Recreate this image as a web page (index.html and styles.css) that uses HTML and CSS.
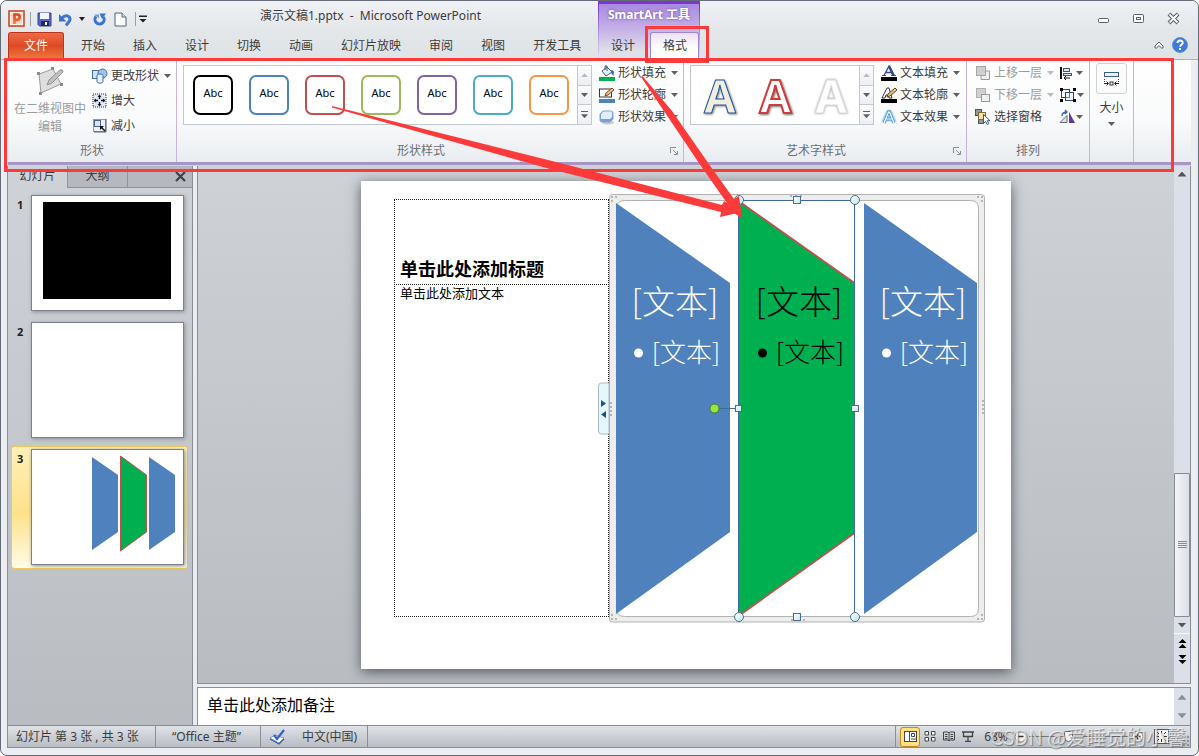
FILE: index.html
```html
<!DOCTYPE html>
<html lang="zh-CN">
<head>
<meta charset="utf-8">
<title>演示文稿1.pptx - Microsoft PowerPoint</title>
<link rel="stylesheet" href="styles.css">
</head>
<body>
<div class="window">
  <header class="header">
    <div class="header-main">
      <div class="title-row">
        <div class="quick">
          <svg class="app-logo" width="18" height="18" viewBox="0 0 18 18"><defs><linearGradient id="pg" x2="0" y2="1"><stop offset="0" stop-color="#d9431f"/><stop offset="1" stop-color="#ef8040"/></linearGradient></defs><rect x="1" y="1" width="15" height="15" fill="#fdf1e8" stroke="#c9492c" stroke-width="1.600"/><path d="M3 3h11v11H3z" fill="#fbd9c4"/><path d="M6.500 14V4.500H9a2.700 2.700 0 0 1 0 5.400H6.500" fill="none" stroke="url(#pg)" stroke-width="2.600"/></svg>
          <span class="vline"></span>
          <button class="icon-btn" aria-label="保存"><svg width="15" height="15" viewBox="0 0 15 15"><path d="M1 1h13v13H2.500L1 12.500z" fill="#5566c9" stroke="#3a3f9c"/><rect x="3" y="1" width="9" height="6" fill="#f2f6ff"/><rect x="4" y="9" width="8" height="5" fill="#262a55"/><rect x="8" y="10" width="2" height="3" fill="#fff"/></svg></button>
          <button class="icon-btn" aria-label="撤消"><svg width="15" height="15" viewBox="0 0 15 15"><path d="M4 6C8 1.500 13.500 4.500 11.500 9L8 13.500" fill="none" stroke="#3f76cf" stroke-width="3"/><path d="M1 2v7.500h7.500z" fill="#3a6fca"/></svg></button>
          <i class="caret dark"></i>
          <button class="icon-btn redo" aria-label="恢复"><svg width="15" height="15" viewBox="0 0 15 15"><path d="M4 4.500A4.600 4.600 0 1 0 11.500 5" fill="none" stroke="#3b73cf" stroke-width="3"/><path d="M7.500 1.500h6.500L10 7z" fill="#3b73cf"/><path d="M2 2.500h5v4z" fill="#6f9be2"/></svg></button>
          <button class="icon-btn doc" aria-label="新建"><svg width="13" height="15" viewBox="0 0 13 15"><path d="M1 1h7l4 4v9H1z" fill="#fff" stroke="#50647c"/><path d="M8 1v4h4" fill="#dbe6f2" stroke="#50647c"/></svg></button>
          <span class="vline"></span>
          <button class="icon-btn more" aria-label="自定义快速访问工具栏"><svg width="8" height="8" viewBox="0 0 8 8"><path d="M0 .5h8v1.500H0zM.5 4h7L4 7.500z" fill="#222"/></svg></button>
        </div>
        <h1 class="doc-title">演示文稿1.pptx&nbsp; -&nbsp; Microsoft PowerPoint</h1>
      </div>
      <nav class="tabs">
        <button class="tab file">文件</button>
        <button class="tab">开始</button><button class="tab">插入</button><button class="tab">设计</button><button class="tab">切换</button><button class="tab">动画</button><button class="tab">幻灯片放映</button><button class="tab">审阅</button><button class="tab">视图</button><button class="tab">开发工具</button>
      </nav>
    </div>
    <div class="context">
      <div class="context-title">SmartArt 工具</div>
      <div class="context-tabs"><button class="tab">设计</button><button class="tab active">格式</button></div>
    </div>
    <div class="header-end">
      <div class="win-controls">
        <button class="icon-btn" aria-label="最小化"><svg width="13" height="13" viewBox="0 0 13 13"><rect x="1.500" y="6.500" width="10" height="4" rx="1" fill="#fff" stroke="#5b5f6b"/></svg></button>
        <button class="icon-btn" aria-label="还原"><svg width="13" height="13" viewBox="0 0 13 13"><rect x="1.500" y="2.500" width="10" height="8" rx="1" fill="#fff" stroke="#5b5f6b"/><rect x="4.500" y="5.500" width="4" height="2" fill="none" stroke="#5b5f6b"/></svg></button>
        <button class="icon-btn" aria-label="关闭"><svg width="13" height="13" viewBox="0 0 13 13"><path d="M2 2l9 9M11 2l-9 9" stroke="#5b5f6b" stroke-width="4"/><path d="M2.500 2.500l8 8M10.500 2.500l-8 8" stroke="#fff" stroke-width="1.800"/></svg></button>
      </div>
      <div class="help-row">
        <button class="icon-btn" aria-label="折叠功能区"><svg width="10" height="8" viewBox="0 0 10 8"><path d="M5 1l4 4v2H7.500L5 4.700 2.500 7H1V5z" fill="#fff" stroke="#555b66"/></svg></button>
        <button class="icon-btn" aria-label="帮助"><svg width="16" height="16" viewBox="0 0 16 16"><circle cx="8" cy="8" r="7.500" fill="#3e7bd6" stroke="#5f93dc"/><path d="M5.500 6c0-3.400 5.200-3.300 5.200-.2 0 2-2.600 1.900-2.600 4" fill="none" stroke="#fff" stroke-width="1.900"/><rect x="7" y="11" width="2" height="2" fill="#fff"/></svg></button>
      </div>
    </div>
  </header>

  <section class="ribbon">
    <div class="group g-shape">
      <div class="group-body">
        <button class="big-btn" disabled>
          <svg width="30" height="32" viewBox="0 0 30 32"><path d="M4 8L18 3l8 15L6 27z" fill="#dedede" stroke="#999"/><path d="M12 19l2-5L25 4q3-1 3 2L17 17z" fill="#c2c2c2" stroke="#8f8f8f"/><g fill="#8c8c8c"><rect x="2" y="6" width="3" height="3"/><rect x="16" y="1" width="3" height="3"/><rect x="25" y="17" width="3" height="3"/><rect x="4" y="26" width="3" height="3"/></g></svg>
          <span>在二维视图中<br>编辑</span>
        </button>
        <div class="stack wide">
          <button class="cmd"><svg width="16" height="16" viewBox="0 0 16 16"><rect x=".5" y="2.500" width="8" height="8" fill="#cfe2f7" stroke="#3f6ea8"/><circle cx="10.500" cy="5.500" r="4.500" fill="#9fc3ea" stroke="#3f6ea8"/><path d="M5 7.500v6c0 2.200 6 2.200 6 0v-6c0-2-6-2-6 0z" fill="#e8f1fb" stroke="#3f6ea8"/></svg>更改形状<i class="caret"></i></button>
          <button class="cmd"><svg width="16" height="16" viewBox="0 0 16 16"><rect x="1" y="1" width="13" height="13" fill="#dfe9f7" stroke="#222b44" stroke-dasharray="1 1"/><path d="M7.500 2v4M7.500 9v4M2 7.500h4M9 7.500h4" stroke="#111" stroke-width="1.400"/><path d="M5.500 4l2-2 2 2zM5.500 11l2 2 2-2zM4 5.500l-2 2 2 2zM11 5.500l2 2-2 2z" fill="#111"/></svg>增大</button>
          <button class="cmd"><svg width="16" height="16" viewBox="0 0 16 16"><rect x="1.500" y="1.500" width="12" height="12" fill="#eaf1fa" stroke="#33415f" stroke-dasharray="1 1"/><path d="M14 1v13H2" fill="none" stroke="#4a5b78"/><rect x="2.500" y="2.500" width="6" height="6" fill="#d7e4f4" stroke="#4c6387"/><path d="M13 13L9 9" stroke="#111" stroke-width="1.500"/><path d="M8 8h4l-4 4z" fill="#111"/></svg>减小</button>
        </div>
      </div>
      <div class="group-label">形状</div>
    </div>

    <div class="group g-styles">
      <div class="group-body">
        <div class="gallery">
          <button class="swatch black">Abc</button><button class="swatch blue">Abc</button><button class="swatch red">Abc</button><button class="swatch green">Abc</button><button class="swatch purple">Abc</button><button class="swatch aqua">Abc</button><button class="swatch orange">Abc</button>
          <div class="gallery-scroll"><button aria-label="上一行" disabled><i class="caret up"></i></button><button aria-label="下一行"><i class="caret"></i></button><button class="expand" aria-label="其他"><i class="caret"></i></button></div>
        </div>
        <div class="stack">
          <button class="cmd"><svg width="16" height="16" viewBox="0 0 16 16"><path d="M3 6l5-4 5 5-6 4z" fill="#e8f0f8" stroke="#405a7a"/><path d="M6 5V1h2v5" fill="none" stroke="#405a7a"/><path d="M12 5c4 0 3 3 2.500 6L12 8z" fill="#3b6eb4"/><rect y="12" width="16" height="4" fill="#00b050"/></svg>形状填充<i class="caret"></i></button>
          <button class="cmd"><svg width="16" height="16" viewBox="0 0 16 16"><rect x=".5" y="2" width="12" height="8" fill="#fff" stroke="#333"/><path d="M6 9l1-3 6-5 2 2-6 5z" fill="#e8c277" stroke="#7a4b2a"/><rect y="12" width="16" height="4" fill="#4f81bd"/></svg>形状轮廓<i class="caret"></i></button>
          <button class="cmd"><svg width="16" height="16" viewBox="0 0 16 16"><ellipse cx="9" cy="13.500" rx="6" ry="2" fill="#c8ccd6"/><path d="M4 2h8q2 0 2 2v6l-3 3H3q-2 0-2-2V5z" fill="#7aa0d8" stroke="#86a3d2"/><path d="M4.500 2.500H13v5.500l-2 2H2V5z" fill="#e3edfb"/></svg>形状效果<i class="caret"></i></button>
        </div>
      </div>
      <div class="group-label">形状样式</div>
      <button class="launcher" aria-label="形状样式对话框"><svg width="8" height="8" viewBox="0 0 8 8"><path d="M.5 6V.5H6M3 3l4 4M7.500 4v3.500H4" fill="none" stroke="#8b8f98"/></svg></button>
    </div>

    <div class="group g-wordart">
      <div class="group-body">
        <div class="gallery">
          <button class="wa cream">A</button><button class="wa crimson">A</button><button class="wa white">A</button>
          <div class="gallery-scroll"><button aria-label="上一行" disabled><i class="caret up"></i></button><button aria-label="下一行"><i class="caret"></i></button><button class="expand" aria-label="其他"><i class="caret"></i></button></div>
        </div>
        <div class="stack">
          <button class="cmd"><svg width="16" height="16" viewBox="0 0 16 16"><path d="M3 10.500L8 1l5 9.500M5 7.500h6" fill="none" stroke="#2f4a86" stroke-width="1.300"/><path d="M8 1l4.500 9.500" stroke="#2f4a86" stroke-width="2.600"/><path d="M1 10.500h4M10 10.500h5" stroke="#2f4a86"/><rect y="12" width="16" height="4"/></svg>文本填充<i class="caret"></i></button>
          <button class="cmd"><svg width="16" height="16" viewBox="0 0 16 16"><path d="M1 11L6 1h2l3 10H8L7 8H5l-1 3z" fill="#fff" stroke="#333"/><path d="M6 10l1-3 7-6 2 2-7 6z" fill="#e8c277" stroke="#5d4428"/><rect y="12" width="16" height="4"/></svg>文本轮廓<i class="caret"></i></button>
          <button class="cmd"><svg width="16" height="16" viewBox="0 0 16 16"><path d="M2.500 13.500L7.500 3h1l5 10.500M5 10h6" fill="none" stroke="#a5d6f5" stroke-width="5" stroke-linejoin="round"/><path d="M3 14L7.500 3h1L13 14M5 10h6" fill="none" stroke="#4a93cc" stroke-width="2.800"/><path d="M3 14L7.500 3h1L13 14M5 10h6" fill="none" stroke="#fff" stroke-width="1.200"/></svg>文本效果<i class="caret"></i></button>
        </div>
      </div>
      <div class="group-label">艺术字样式</div>
      <button class="launcher" aria-label="艺术字样式对话框"><svg width="8" height="8" viewBox="0 0 8 8"><path d="M.5 6V.5H6M3 3l4 4M7.500 4v3.500H4" fill="none" stroke="#8b8f98"/></svg></button>
    </div>

    <div class="group g-arrange">
      <div class="group-body">
        <div class="stack">
          <button class="cmd" disabled><svg width="16" height="16" viewBox="0 0 16 16"><path d="M11 6h3.500v8.500H6V11" fill="#eee" stroke="#999"/><rect x="1.500" y="1.500" width="9" height="9" fill="#cfcfcf" stroke="#a5a5a5"/></svg>上移一层<i class="caret"></i></button>
          <button class="cmd" disabled><svg width="16" height="16" viewBox="0 0 16 16"><rect x="1.500" y="1.500" width="9" height="9" fill="#d0d0d0" stroke="#b0b0b0"/><rect x="6.500" y="7.500" width="8" height="7" fill="#f0f0f0" stroke="#999"/></svg>下移一层<i class="caret"></i></button>
          <button class="cmd"><svg width="16" height="16" viewBox="0 0 16 16"><rect x=".5" y=".5" width="6" height="6" fill="#999" stroke="#555"/><rect x="3.500" y="9.500" width="5" height="5" fill="#999" stroke="#555"/><rect x="3.500" y="3.500" width="7" height="7" fill="#f7e2a4" stroke="#7d6b3a"/><path d="M8.500 5.500v9l2-2 1.700 3 1.600-.8-1.500-3H15z" fill="#fff" stroke="#3a5a82"/></svg>选择窗格</button>
        </div>
        <div class="stack tight">
          <button class="cmd" aria-label="对齐"><svg width="16" height="16" viewBox="0 0 16 16"><path d="M2 2v12" stroke="#111" stroke-width="2"/><rect x="4.500" y="3.500" width="6" height="3" fill="#dbe6f3" stroke="#456"/><rect x="4.500" y="8.500" width="8" height="2" fill="#dbe6f3" stroke="#456"/><path d="M5 13h6M7 11l-2 2 2 2" fill="none" stroke="#111"/></svg><i class="caret"></i></button>
          <button class="cmd" aria-label="组合"><svg width="18" height="16" viewBox="0 0 18 16"><rect x="2.500" y="2.500" width="8" height="8" fill="none" stroke="#27446b"/><rect x="6.500" y="5.500" width="8" height="8" fill="#dbe6f355" stroke="#27446b"/><path d="M1 1h3v3H1zM14 1h3v3h-3zM1 12h3v3H1zM14 12h3v3h-3z"/></svg><i class="caret"></i></button>
          <button class="cmd" aria-label="旋转"><svg width="16" height="16" viewBox="0 0 16 16"><path d="M1 13.500h7v-7z" fill="#dfe3ea" stroke="#667"/><path d="M10 3v11h6z" fill="#5b3b96"/><path d="M3 7c0-3 2-4 5-4M6 1l2 2-2 2" fill="none" stroke="#2f62ad" stroke-width="1.300"/></svg><i class="caret"></i></button>
        </div>
      </div>
      <div class="group-label">排列</div>
    </div>

    <div class="group g-size">
      <button class="size-btn"><span class="size-icon"><svg width="18" height="18" viewBox="0 0 18 18"><rect x="1.500" y="2.500" width="14" height="4" fill="#eaf1fa" stroke="#3c5c86"/><path d="M1.500 9v4M15.500 9v4" stroke="#333" stroke-dasharray="1 1"/><path d="M1 13.500h4M12 13.500h4M3.500 11.500l2 2-2 2M13.500 11.500l-2 2 2 2" fill="none" stroke="#222"/><rect x="7" y="12" width="3" height="3" fill="#fff" stroke="#333"/></svg></span>大小<i class="caret"></i></button>
    </div>
  </section>

  <main class="work">
    <aside class="pane">
      <div class="pane-tabs"><button class="pane-tab on">幻灯片</button><button class="pane-tab">大纲</button><button class="pane-close" aria-label="关闭窗格"><svg width="11" height="11" viewBox="0 0 11 11"><path d="M1 1l9 9M10 1l-9 9" stroke="#3f4347" stroke-width="2.200"/></svg></button></div>
      <ol class="thumbs">
        <li class="thumb-item"><span>1</span><div class="thumb"><svg viewBox="0 0 151 114"><rect x="11" y="6" width="128" height="97"/></svg></div></li>
        <li class="thumb-item"><span>2</span><div class="thumb"></div></li>
        <li class="thumb-item selected"><span>3</span><div class="thumb"><svg viewBox="0 0 151 114"><path d="M60 7l26 18v57l-26 18zM117 7l26 18v57l-26 18z" fill="#4f81bd"/><path d="M88.500 6l26 19v57l-26 19z" fill="#00b050" stroke="#c0504d"/></svg></div></li>
      </ol>
    </aside>

    <div class="editor">
      <div class="canvas-row">
        <div class="canvas">
          <div class="slide">
            <h2 class="ph ph-title">单击此处添加标题</h2>
            <p class="ph ph-body">单击此处添加文本</p>
            <svg class="smartart" viewBox="361 180 650 488">
              <defs><linearGradient id="hg" x2="1" y2="1"><stop offset="0" stop-color="#fff"/><stop offset="1" stop-color="#bfe6ee"/></linearGradient></defs>
              <path d="M598.500 385q0-3 3-3H609v51h-7.500q-3 0-3-3z" fill="#e4f8fb" stroke="#a9b9c0"/>
              <path d="M601 399l5 3.500-5 3.500zM606 410l-5 3.500 5 3.500z" fill="#1c5487"/>
              <path fill-rule="evenodd" d="M612.500 193.500h369q3 0 3 3v421.500q0 3-3 3h-369q-3 0-3-3V196.500q0-3 3-3zM624.500 199.500q-8 0-8 8v400q0 8 8 8h346q8 0 8-8v-400q0-8-8-8z" fill="#ededed" stroke="#b2b2b2"/>
              <g fill="#4f81bd"><path d="M616 202l114 80v249l-114 82z"/><path d="M864 202l113 80v249l-113 82z"/></g>
              <path d="M739.500 201l115 81v250l-115 82z" fill="#00b050"/>
              <path d="M740 201l114.500 81M854.500 532L740 614" fill="none" stroke="#c0504d" stroke-width="1.800"/>
              <path d="M739.500 201v413M853.500 282v250" stroke="#c0504d"/>
              <g fill="#b5b5b5"><path d="M611 195h2v2h-2zM615 195h2v2h-2zM611 199h2v2h-2zM977 195h2v2h-2zM981 195h2v2h-2zM981 199h2v2h-2zM611 613h2v2h-2zM611 617h2v2h-2zM615 617h2v2h-2zM981 613h2v2h-2zM981 617h2v2h-2zM977 617h2v2h-2z"/><path d="M610 401h2v2h-2zM610 405h2v2h-2zM610 409h2v2h-2zM610 413h2v2h-2zM982 399h2v2h-2zM982 403h2v2h-2zM982 407h2v2h-2zM982 411h2v2h-2zM790 194h2v2h-2zM795 194h2v2h-2zM800 194h2v2h-2zM791 618h2v2h-2zM797 618h2v2h-2zM803 618h2v2h-2z"/></g>
              <path d="M738.500 199v416M854.500 199v416M739 199.500h116M719 407.500h16" stroke="#3f6a9b" fill="none"/>
              <g fill="url(#hg)" stroke="#4d6f86"><circle cx="739" cy="199" r="4.500"/><circle cx="855" cy="199" r="4.500"/><circle cx="739" cy="616" r="4.500"/><circle cx="855" cy="616" r="4.500"/><rect x="793.500" y="195.500" width="7" height="7"/><rect x="793.500" y="612.500" width="7" height="7"/><rect x="735.500" y="404.500" width="6" height="6"/><rect x="851.500" y="404.500" width="7" height="6"/></g>
              <circle cx="714.500" cy="407.500" r="4.500" fill="#92e83e" stroke="#4c7a3a"/>
              <g class="lvl1"><text x="675" y="313" fill="#fff">[文本]</text><text x="799" y="313">[文本]</text><text x="923" y="313" fill="#fff">[文本]</text></g>
              <g class="lvl2"><text x="686" y="361" fill="#fff">[文本]</text><text x="810" y="361">[文本]</text><text x="934" y="361" fill="#fff">[文本]</text></g>
              <circle cx="638.500" cy="352" r="4.500" fill="#fff"/><circle cx="762.500" cy="352" r="4.500"/><circle cx="886.500" cy="352" r="4.500" fill="#fff"/>
            </svg>
          </div>
        </div>
        <div class="vscroll">
          <button aria-label="向上滚动"><i class="tri up"></i></button>
          <div class="track"><div class="handle"><svg width="9" height="8" viewBox="0 0 9 8"><path d="M0 .5h9M0 2.500h9M0 4.500h9M0 6.500h9" stroke="#888d95"/></svg></div></div>
          <button aria-label="向下滚动"><i class="tri"></i></button>
          <div class="pager">
            <button aria-label="上一张幻灯片"><svg width="9" height="9" viewBox="0 0 9 9"><path d="M4.500 0L8.500 4h-8zM4.500 5L8.500 9h-8z"/></svg></button>
            <button aria-label="下一张幻灯片"><svg width="9" height="9" viewBox="0 0 9 9"><path d="M.5 0h8l-4 4zM.5 5h8l-4 4z"/></svg></button>
          </div>
        </div>
      </div>
      <div class="notes">
        <textarea aria-label="备注" placeholder="单击此处添加备注"></textarea>
        <div class="notes-scroll"><button aria-label="备注向上"><i class="tri up"></i></button><button aria-label="备注向下"><i class="tri"></i></button></div>
      </div>
    </div>
  </main>

  <footer class="status">
    <span class="seg s-count">幻灯片 第 3 张 , 共 3 张</span>
    <span class="seg s-theme">“Office 主题”</span>
    <span class="seg s-lang"><svg width="17" height="16" viewBox="0 0 17 16"><path d="M1 9l5-3 9 3-5 5z" fill="#fff" stroke="#7f98cb"/><path d="M1 10l9 5 5-5" fill="none" stroke="#3d62ac" stroke-width="1.300"/><path d="M5 6l3 4 7-9" fill="none" stroke="#2f62c4" stroke-width="2.200"/></svg>中文(中国)</span>
    <div class="status-end">
      <button class="view on" aria-label="普通视图"><svg width="13" height="11" viewBox="0 0 13 11"><rect x=".5" y=".5" width="12" height="10" fill="#fff" stroke="#444"/><path d="M5.500 0v11M7.500 2.500h3v3h-3zM7 8h5" fill="none" stroke="#444"/></svg></button>
      <button class="view" aria-label="幻灯片浏览"><svg width="12" height="11" viewBox="0 0 12 11"><path d="M1 .5h3.500v3.500H1zM7.500 .5H11v3.500H7.500zM1 6.500h3.500V10H1zM7.500 6.500H11V10H7.500z" fill="#fff" stroke="#444"/></svg></button>
      <button class="view" aria-label="阅读视图"><svg width="12" height="11" viewBox="0 0 12 11"><path d="M.5 1H5l1 1 1-1h4.500v8H7l-1 1-1-1H.5zM6 2v8M2 3.500h2.500M2 5.500h2.500M2 7.500h2.500M7.500 3.500H10M7.500 5.500H10M7.500 7.500H10" fill="none" stroke="#444"/></svg></button>
      <button class="view" aria-label="幻灯片放映"><svg width="12" height="11" viewBox="0 0 12 11"><path d="M0 1h12M1.500 1v4.500h9V1M6 6v4M3 10.500h6" fill="none" stroke="#444" stroke-width="1.300"/></svg></button>
      <button class="zoom-value">68%</button>
      <button class="round" aria-label="缩小"><svg width="13" height="13" viewBox="0 0 13 13"><circle cx="6.500" cy="6.500" r="5.500" fill="#f4f4f4" stroke="#777"/><path d="M3.500 6.500h6" stroke="#333" stroke-width="1.600"/></svg></button>
      <input class="zoom" type="range" min="0" max="100" value="38" aria-label="显示比例">
      <button class="round" aria-label="放大"><svg width="13" height="13" viewBox="0 0 13 13"><circle cx="6.500" cy="6.500" r="5.500" fill="#f4f4f4" stroke="#777"/><path d="M3.500 6.500h6M6.500 3.500v6" stroke="#333" stroke-width="1.600"/></svg></button>
      <button class="fit" aria-label="适应窗口"><svg width="15" height="15" viewBox="0 0 15 15"><rect x=".5" y=".5" width="14" height="14" fill="#f4f4f4" stroke="#555"/><path d="M7.500 2v3M7.500 10v3M2 7.500h3M10 7.500h3M3 3l2 2M12 3l-2 2M3 12l2-2M12 12l-2-2" stroke="#333"/></svg></button>
      <svg class="grip" width="11" height="11" viewBox="0 0 11 11"><path d="M8 0h2v2H8zM4 4h2v2H4zM8 4h2v2H8zM0 8h2v2H0zM4 8h2v2H4zM8 8h2v2H8z" fill="#8e929a"/></svg>
    </div>
  </footer>
  <div class="watermark">CSDN @爱睡觉的小馨</div>
  <svg class="marks" width="1199" height="756" viewBox="0 0 1199 756">
    <g fill="none" stroke="#fd3a3a" stroke-width="3"><rect x="5.500" y="59.500" width="1167" height="111"/><rect x="646.500" y="27.500" width="61" height="34"/></g>
    <g fill="#fd3a3a"><path d="M332 106L564 164 722 205 724 201 742 212 720 217 721 212 550 169 332 107.500z"/><path d="M641 77L642.500 76 672 111 711 167 734 199 739 196 742 218 722 206 727 203 703 169z"/></g>
  </svg>
</div>
</body>
</html>
```
FILE: styles.css
```css
* { box-sizing: border-box; }
body {
  margin: 0;
  background: #fff;
  color: #3b3b3b;
  font: 12px/16px "Noto Sans", "Noto Sans CJK SC", sans-serif;
}
button {
  margin: 0;
  padding: 0;
  border: 0;
  background: none;
  color: inherit;
  font: inherit;
}
svg { display: block; flex: none; }
h1, h2, p, ol { margin: 0; padding: 0; }
i { font-style: normal; }

.window {
  position: relative;
  display: flex;
  flex-direction: column;
  height: 100vh;
  padding: 0 7px 7px 6px;
  overflow: hidden;
  border: 1px solid #646a76;
  border-radius: 7px;
  background: #ecedf1;
}

.caret {
  width: 7px;
  height: 4px;
  flex: none;
  background: #5c5f66;
  clip-path: polygon(0 0, 100% 0, 50% 100%);
}
.caret.up { clip-path: polygon(0 100%, 100% 100%, 50% 0); }
.caret.dark { width: 6px; background: #222; }
:disabled .caret { background: #b9bbc0; }

/* header */
.header {
  display: flex;
  flex: none;
  height: 59px;
  margin: 0 -7px 0 -6px;
  padding: 0 7px;
  border-bottom: 1px solid #b9a3dc;
  border-radius: 6px 6px 0 0;
  background: linear-gradient(#eff1f4, #e4e7ea 50%, #dfe3e6);
}
.header-main { width: 590px; flex: none; }
.title-row { display: flex; height: 31px; }
.quick {
  display: flex;
  align-items: center;
  width: 252px;
  height: 36px;
  gap: 6px;
}
.vline { width: 1px; height: 14px; background: #9b9fa6; }
.vline:first-of-type { margin-right: 0; margin-left: -2px; }
.icon-btn { display: flex; }
.redo, .doc { margin-left: 1px; }
.quick .doc + .vline { margin-left: 2px; }
.more { margin-left: -3px; }
.doc-title { padding-top: 7px; font-size: 12px; font-weight: 400; white-space: nowrap; }
.tabs { display: flex; }
.tab { height: 27px; padding: 0 14px; }
.tab.file {
  width: 56px;
  margin-right: 3px;
  border: 1px solid #b8351a;
  border-bottom: 0;
  border-radius: 3px 3px 0 0;
  background: linear-gradient(#ee6a45, #dd4a25 50%, #ee7a3c);
  color: #fff;
}
.context {
  width: 102px;
  flex: none;
  border: solid #8a4ed6;
  border-width: 3px 1px 0;
  border-image: linear-gradient(#7f35d3 10%, #b59be0 60%, #dcdce8) 3 1 0;
  background: linear-gradient(#a98be0, #c4b0e6 45%, #dfdfe9 85%, #e0e3e8);
  text-align: center;
}
.context-title {
  height: 28px;
  padding-top: 3px;
  color: #fff;
  font-weight: 700;
  text-shadow: 0 0 3px #6d4aa8;
  white-space: nowrap;
}
.context-tabs { display: flex; justify-content: space-between; }
.context-tabs .tab { padding: 0 12px; }
.context-tabs .tab.active {
  padding: 0 11px 0 12px;
  border: 1px solid #a184d3;
  border-bottom: 0;
  border-radius: 3px 3px 0 0;
  background: linear-gradient(#e9e2f5, #fff 60%);
}
.header-end { flex: 1; }
.win-controls {
  display: flex;
  justify-content: flex-end;
  gap: 22px;
  height: 31px;
  padding: 11px 11px 0 0;
}
.help-row {
  display: flex;
  justify-content: flex-end;
  align-items: center;
  gap: 8px;
  height: 26px;
  padding-right: 3px;
}

/* ribbon */
.ribbon {
  display: flex;
  flex: none;
  height: 105px;
  margin-left: 1px;
  border-bottom: 3px solid #a795c6;
  background: linear-gradient(#fff, #f9fafb 60%, #e9ecf0);
}
.group {
  position: relative;
  display: flex;
  flex-direction: column;
  flex: none;
  border-right: 1px solid #c5b5e4;
}
.group-body { display: flex; height: 83px; padding-top: 2px; }
.group-label { color: #6b7076; text-align: center; }
.g-styles .group-label, .g-wordart .group-label { padding-right: 18px; }
.g-shape { width: 169px; }
.g-styles { width: 507px; }
.g-wordart { width: 283px; }
.g-arrange { width: 123px; }
.g-size { width: 44px; }
.big-btn {
  display: flex;
  flex-direction: column;
  align-items: center;
  width: 84px;
  padding-top: 4px;
  line-height: 18px;
}
.big-btn svg { margin-bottom: 2px; }
.stack { display: flex; flex-direction: column; }
.stack.wide { gap: 3px; padding-top: 3px; }
.cmd { display: flex; align-items: center; gap: 3px; height: 22px; white-space: nowrap; }
.cmd .caret { margin-left: 2px; }
button:disabled { color: #9c9c9c; }
.gallery {
  display: flex;
  align-items: center;
  height: 60px;
  margin: 3px 7px 0 6px;
  padding-left: 1px;
  border: 1px solid #c3c7cf;
  background: #fff;
}
.gallery-scroll { display: flex; flex-direction: column; width: 14px; margin-left: auto; align-self: stretch; }
.g-styles .gallery { width: 409px; margin-left: 6px; }
.g-wordart .gallery { width: 184px; }
.gallery-scroll button {
  display: flex;
  flex: 1;
  align-items: center;
  justify-content: center;
  border: solid #c3c7cf;
  border-width: 0 0 1px 1px;
  background: linear-gradient(#fbfbfd, #edeff3);
}
.gallery-scroll button:last-child { border-bottom: 0; }
.gallery-scroll .expand { flex-direction: column; gap: 2px; }
.expand::before { content: ""; width: 7px; height: 1px; background: #5c5f66; }
.swatch {
  width: 40px;
  height: 40px;
  margin: 0 8px;
  padding-bottom: 4px;
  border: 2px solid #000;
  border-radius: 7px;
  background: #fff;
  color: #000;
  font-size: 11px;
}
.blue { border-color: #4f81bd; }
.red { border-color: #c0504d; }
.green { border-color: #9bbb59; }
.purple { border-color: #8064a2; }
.aqua { border-color: #4bacc6; }
.orange { border-color: #f79646; }
.wa {
  width: 56px;
  height: 58px;
  font: 700 46px/58px "Noto Sans", sans-serif;
}
.cream { color: #f1eee0; -webkit-text-stroke: 1px #1f559c; filter: drop-shadow(1px 1px 1px #888); }
.crimson { color: #fff; -webkit-text-stroke: 2px #d03a38; filter: drop-shadow(1px 1px 1px #777); }
.white { color: #fff; -webkit-text-stroke: 1px #ddd; filter: drop-shadow(0 0 1px #999); }
.launcher { position: absolute; right: 5px; bottom: 7px; }
.g-arrange .group-body { padding-left: 8px; }
.g-arrange .stack:first-child { width: 84px; }
.tight .cmd { gap: 0; justify-content: space-between; width: 24px; }
.tight .caret { margin-left: 0; }
.size-btn { display: flex; flex-direction: column; align-items: center; gap: 6px; padding-top: 3px; }
.size-icon {
  display: grid;
  place-items: center;
  width: 31px;
  height: 31px;
  border: 1px solid #cfd2d8;
  border-radius: 3px;
  background: #fbfbfc;
}

/* work area */
.work { display: flex; flex: 1; min-height: 0; border-top: 1px solid #d3d2df; }
.pane {
  display: flex;
  flex-direction: column;
  flex: none;
  width: 186px;
  border: solid #888e96;
  border-width: 0 1px;
  background: linear-gradient(#cfd2d7, #b9bdc2);
}
.pane-tabs { display: flex; height: 22px; }
.pane-tab { width: 60px; border: solid #8f949b; border-width: 0 1px 1px 0; background: #b5b9bf; padding-bottom: 2px; }
.pane-tab.on { border-bottom: 0; background: none; }
.pane-close {
  display: flex;
  flex: 1;
  align-items: center;
  justify-content: flex-end;
  padding-right: 6px;
  border-bottom: 1px solid #8f949b;
  background: #b5b9bf;
}
.thumbs { display: flex; flex-direction: column; gap: 4px; padding: 4px 4px 4px 3px; list-style: none; }
.thumb-item {
  display: flex;
  height: 123px;
  padding: 2px 3px;
  border: 1px solid transparent;
  border-radius: 3px;
}
.thumb-item.selected {
  border-color: #efc95a;
  background: linear-gradient(#fff0b8, #fde28a 55%, #fffbe6);
}
.thumb-item span { width: 16px; padding: 2px 0 0 2px; color: #222; font-weight: 700; font-size: 11px; }
.thumb {
  width: 153px;
  height: 116px;
  border: 1px solid #7d828a;
  background: #fff;
  box-shadow: 1px 1px 4px #8a8e94;
}
.editor { display: flex; flex: 1; flex-direction: column; min-width: 0; margin-left: 4px; }
.canvas-row { display: flex; flex: 1; min-height: 0; border: solid #888e96; border-width: 0 1px 1px; }
.canvas {
  display: grid;
  flex: 1;
  place-items: center;
  min-width: 0;
  overflow: hidden;
  background: linear-gradient(#ced1d6, #b9bdc2);
}
.slide {
  position: relative;
  width: 650px;
  height: 488px;
  background: #fff;
  box-shadow: 0 3px 12px #555a60;
}
.ph {
  position: absolute;
  left: 33px;
  width: 215px;
  padding: 0 5px;
  border: 1px dotted #222;
  color: #000;
}
.ph-title { top: 18px; height: 86px; padding-top: 56px; font: 700 18px/24px "Noto Sans CJK SC", sans-serif; }
.ph-body { top: 103px; height: 333px; font: 13px/16px "Noto Sans CJK SC", sans-serif; }
.smartart { position: absolute; inset: 0; width: 100%; height: 100%; }
.smartart text { text-anchor: middle; font-family: "Noto Sans CJK SC", sans-serif; font-weight: 300; }
.lvl1 { font-size: 33px; }
.lvl2 { font-size: 26px; }

.vscroll { display: flex; flex: none; flex-direction: column; width: 16px; background: #dbe0e8; }
.vscroll > button { display: grid; place-items: center; height: 16px; }
.tri { width: 9px; height: 5px; background: #50555b; clip-path: polygon(0 0, 100% 0, 50% 100%); }
.tri.up { clip-path: polygon(0 100%, 100% 100%, 50% 0); }
.track { display: flex; flex: 1; flex-direction: column; justify-content: flex-end; }
.handle {
  display: grid;
  place-items: center;
  height: 33%;
  border: 1px solid #848a95;
  border-radius: 1px;
  background: linear-gradient(90deg, #f4f5f8, #dcdfe6);
}
.pager {
  display: flex;
  flex-direction: column;
  align-items: center;
  gap: 7px;
  height: 50px;
  padding-top: 5px;
  border-top: 1px solid #f7f8fa;
}
.notes {
  display: flex;
  flex: none;
  height: 38px;
  margin-top: 3px;
  border: solid #888e96;
  border-width: 1px 1px 0;
  background: #fff;
}
.notes textarea {
  flex: 1;
  min-width: 0;
  padding: 4px 9px;
  border: 0;
  outline: 0;
  resize: none;
  overflow: hidden;
  font: 16px/24px "Noto Sans CJK SC", sans-serif;
}
.notes textarea::placeholder { color: #000; opacity: 1; }
.notes-scroll { display: flex; flex-direction: column; justify-content: space-around; align-items: center; width: 16px; background: #dbe0e8; }
.notes-scroll button { display: flex; }
.notes-scroll .tri { background: #86928f; }

/* status bar */
.status {
  display: flex;
  flex: none;
  align-items: stretch;
  height: 23px;
  border: 1px solid #888e96;
  background: linear-gradient(#dfe2e7, #b9bdc4);
  white-space: nowrap;
}
.seg { display: flex; align-items: center; border-right: 1px solid #8a8f97; }
.s-count { width: 148px; padding-left: 8px; }
.s-theme { width: 105px; padding-left: 16px; }
.s-lang { width: 107px; gap: 16px; padding-left: 8px; }
.status-end { display: flex; align-items: center; margin-left: auto; padding-left: 4px; border-left: 1px solid #8a8f97; }
.view { display: grid; place-items: center; width: 19px; height: 20px; }
.view.on { width: 20px; border: 1px solid #c08a1e; border-radius: 3px; background: #ffe083; }
.zoom-value { width: 32px; margin: 0 2px 0 3px; }
.zoom { width: 100px; height: 13px; margin: 0 2px; appearance: none; background: linear-gradient(#777, #777) center / 100% 1px no-repeat; }
.zoom::-webkit-slider-thumb { appearance: none; width: 9px; height: 11px; border: 1px solid #666; border-radius: 2px 2px 5px 5px; background: #f5f5f5; }
.fit { margin: 0 10px 0 10px; }
.grip { align-self: flex-end; }

/* overlays */
.watermark {
  position: absolute;
  right: 12px;
  bottom: 4px;
  color: #ffffffa0;
  font: 20px/28px "Noto Sans CJK SC", sans-serif;
  text-shadow: 1px 1px 1px #555a;
  white-space: nowrap;
  pointer-events: none;
}
.marks { position: absolute; top: -1px; left: -1px; pointer-events: none; }
```
